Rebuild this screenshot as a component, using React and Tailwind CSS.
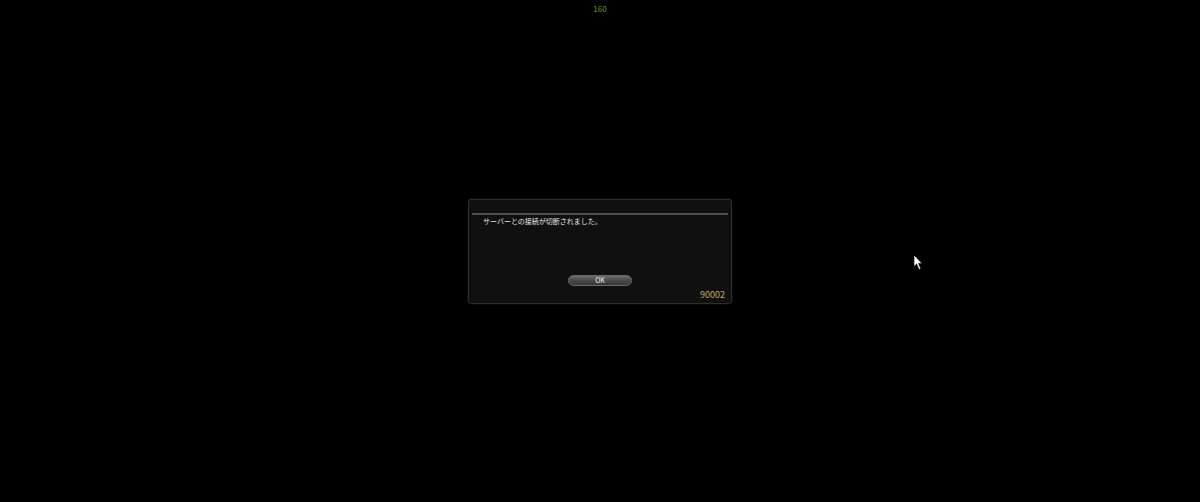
export default function App() {
  return (
    <div className="relative w-[1200px] h-[502px] bg-black overflow-hidden flex items-center justify-center font-['Noto_Sans_CJK_JP','Noto_Sans',sans-serif]">
      {/* frame counter */}
      <div className="absolute top-[4px] left-0 right-0 text-center text-[8px] leading-[10px] text-[#6f9a34]">
        160
      </div>

      {/* error dialog */}
      <div className="w-[264px] h-[105px] border border-[#2e2e2e] rounded-[3px] bg-[#101010] flex flex-col shadow-[0_0_0_1px_#0a0a0a]">
        <div className="mt-[13px] mx-[3px] h-[2px] bg-[#505050]" />
        <p className="mt-[1px] px-[14px] text-[7px] leading-[11px] text-[#e6e6e6]">
          サーバーとの接続が切断されました。
        </p>
        <button className="mt-[48px] self-center w-[64px] h-[11px] rounded-full border border-[#6a6a6a] bg-gradient-to-b from-[#6c6c6c] via-[#4a4a4a] to-[#343434] text-[7px] leading-[9px] text-[#f0f0f0]">
          OK
        </button>
        <div className="mt-[4px] pr-[6px] text-right text-[9px] leading-[10px] text-[#c4a864]">
          90002
        </div>
      </div>

      {/* mouse pointer */}
      <svg className="absolute left-[913px] top-[254px]" width="11" height="17" viewBox="0 0 11 17">
        <path d="M1 1 L1 12.5 L3.6 10 L6 15.5 L7.8 14.7 L5.5 9.4 L9 9.4 Z" fill="#ffffff" stroke="#000000" strokeWidth="0.6" />
      </svg>
    </div>
  );
}
